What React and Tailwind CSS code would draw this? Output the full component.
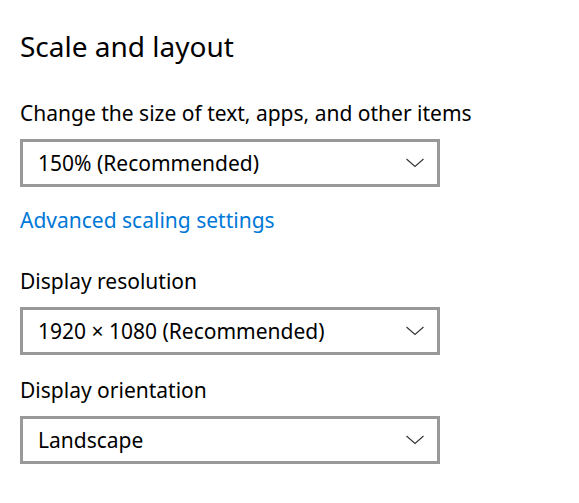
import React from "react";

const font = { fontFamily: '"Noto Sans", "Open Sans", sans-serif' };

function Chevron() {
  return (
    <svg width="18" height="10" viewBox="0 0 18 10" className="shrink-0">
      <polyline points="0.5,1 9,8.5 17.5,1" fill="none" stroke="#333333" strokeWidth="1.1" />
    </svg>
  );
}

function Dropdown({ value }) {
  return (
    <div className="w-[420px] h-[48px] border-[3px] border-[#999999] bg-white flex items-center justify-between pl-[15px] pr-[13px]">
      <span className="text-[21px] leading-[28px] text-black">{value}</span>
      <Chevron />
    </div>
  );
}

export default function App() {
  return (
    <div className="w-[579px] h-[503px] bg-white text-black pl-[20px]" style={font}>
      <div className="flex flex-col items-start pt-[26px]">
        <h1 className="text-[28px] leading-[40px] font-normal">Scale and layout</h1>
        <div className="mt-[33px] text-[21px] leading-[28px]">Change the size of text, apps, and other items</div>
        <div className="mt-[12px]">
          <Dropdown value="150% (Recommended)" />
        </div>
        <a className="mt-[19px] text-[21px] leading-[28px] text-[#0078d7]">Advanced scaling settings</a>
        <div className="mt-[33px] text-[21px] leading-[28px]">Display resolution</div>
        <div className="mt-[12px]">
          <Dropdown value="1920 × 1080 (Recommended)" />
        </div>
        <div className="mt-[21px] text-[21px] leading-[28px]">Display orientation</div>
        <div className="mt-[12px]">
          <Dropdown value="Landscape" />
        </div>
      </div>
    </div>
  );
}
